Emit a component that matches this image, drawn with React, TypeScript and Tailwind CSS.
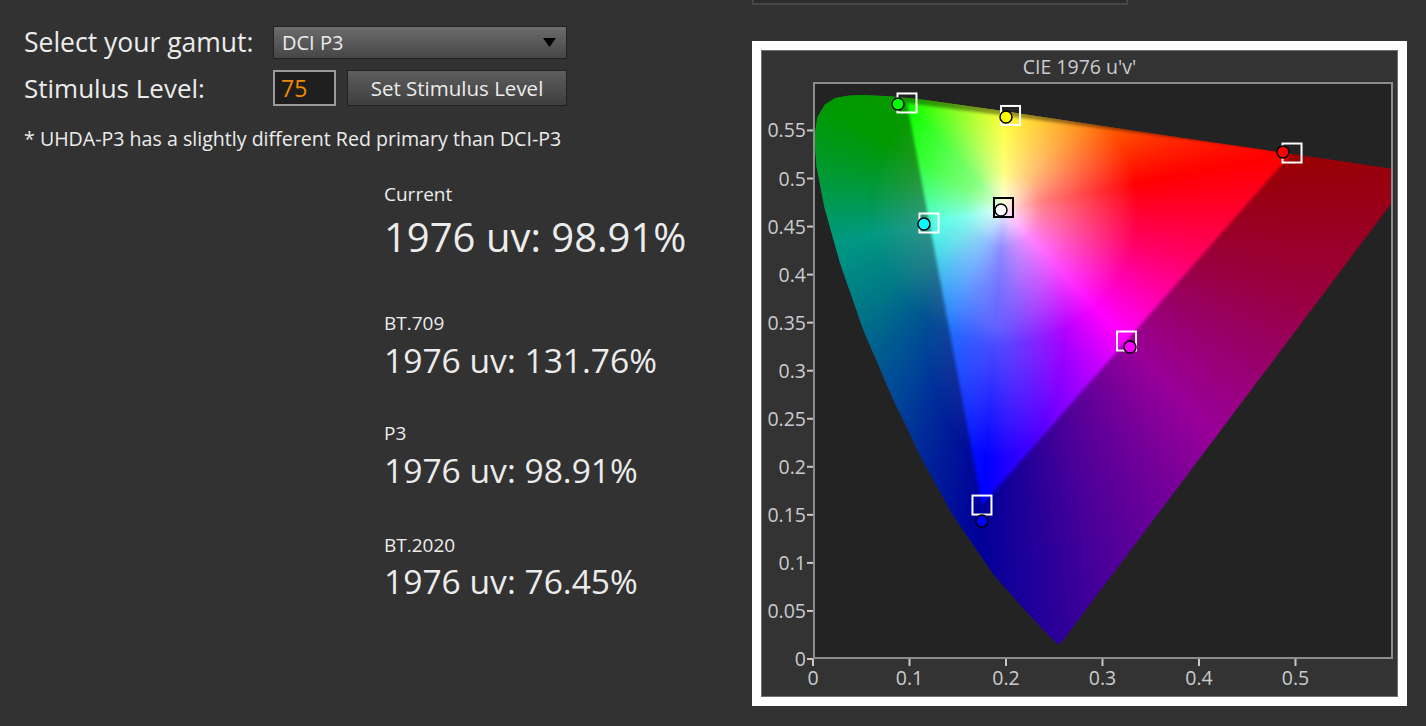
import React from "react";

// CIE 1976 u'v' spectral locus, 380nm -> 700nm
const LOCUS: [number, number][] = [
  [0.2568, 0.0166], [0.2557, 0.0159], [0.2545, 0.0159], [0.2522, 0.0169],
  [0.2461, 0.0226], [0.2347, 0.035], [0.2161, 0.0549], [0.1877, 0.0871],
  [0.1441, 0.151], [0.1147, 0.2044], [0.0828, 0.2708], [0.0521, 0.3427],
  [0.0282, 0.4117], [0.0119, 0.4698], [0.0035, 0.5131], [0.0014, 0.5432],
  [0.0046, 0.5638], [0.0123, 0.577], [0.0231, 0.5837], [0.036, 0.5861],
  [0.0501, 0.5868], [0.0792, 0.5856], [0.1127, 0.5821], [0.1531, 0.5766],
  [0.2026, 0.5694], [0.2623, 0.5604], [0.3315, 0.5501], [0.4035, 0.5393],
  [0.4692, 0.5296], [0.5203, 0.5219], [0.5565, 0.5165], [0.583, 0.5125],
  [0.6005, 0.5099], [0.6234, 0.5065],
];

const PLOT_W = 580;
const PLOT_H = 577;
const px = (u: number) => u * 965;
const py = (v: number) => PLOT_H - v * 961;

const TRIANGLE: [number, number][] = [
  [0.0974, 0.5786],
  [0.4964, 0.5265],
  [0.1751, 0.1602],
];

const WHITE: [number, number] = [0.1978, 0.4683];

const targets = [
  { u: 0.0974, v: 0.5786, dark: false },
  { u: 0.2047, v: 0.5656, dark: false },
  { u: 0.1974, v: 0.4698, dark: true },
  { u: 0.1202, v: 0.4537, dark: false },
  { u: 0.4964, v: 0.5265, dark: false },
  { u: 0.3249, v: 0.3309, dark: false },
  { u: 0.1751, v: 0.1602, dark: false },
];

const measured = [
  { u: 0.0881, v: 0.5775, c: "#00ff00" },
  { u: 0.2, v: 0.564, c: "#ffff00" },
  { u: 0.1948, v: 0.4672, c: "#ffffff" },
  { u: 0.115, v: 0.4527, c: "#00ffff" },
  { u: 0.487, v: 0.5276, c: "#ff0000" },
  { u: 0.3285, v: 0.3247, c: "#ff00ff" },
  { u: 0.1751, v: 0.1436, c: "#0000ff" },
];

const yTicks = ["0", "0.05", "0.1", "0.15", "0.2", "0.25", "0.3", "0.35", "0.4", "0.45", "0.5", "0.55"];
const xTicks = ["0", "0.1", "0.2", "0.3", "0.4", "0.5"];

const pts = (list: [number, number][]) =>
  list.map(([u, v]) => `${px(u).toFixed(1)},${py(v).toFixed(1)}`).join(" ");

const Chart = (): JSX.Element => {
  const wx = px(WHITE[0]);
  const wy = py(WHITE[1]);
  const clip = `polygon(${LOCUS.map(([u, v]) => `${px(u).toFixed(1)}px ${py(v).toFixed(1)}px`).join(", ")})`;
  const bg =
    `radial-gradient(circle at ${wx}px ${wy}px, rgba(255,255,255,0.95) 0px, rgba(255,255,255,0.5) 38px, rgba(255,255,255,0) 135px), ` +
    `radial-gradient(ellipse 70px 130px at ${wx - 8}px ${wy + 120}px, rgba(235,240,255,0.35) 0px, rgba(235,240,255,0) 100%), ` +
    `conic-gradient(from 0deg at ${wx}px ${wy}px, #ffff00 0deg, #ff8c00 40deg, #ff0000 79deg, #ff0066 105deg, #ff00ff 137deg, #7a00ff 165deg, #0000ff 184deg, #0070ff 208deg, #00c8e0 235deg, #00ffd8 259deg, #00ff50 282deg, #00ff00 300deg, #10ff00 317deg, #99ff00 340deg, #ffff00 360deg)`;
  const tri = TRIANGLE.map(([u, v]) => [px(u), py(v)]);
  const darkPath = `M-20 -20 H640 V640 H-20 Z M${tri[0][0]} ${tri[0][1]} L${tri[1][0]} ${tri[1][1]} L${tri[2][0]} ${tri[2][1]} Z`;

  return (
    <div className="relative w-[580px] h-[577px] ml-[51px]">
      <div className="absolute inset-0 overflow-hidden bg-[#232323]">
        <div className="absolute inset-0" style={{ clipPath: clip, background: bg }} />
        <svg className="absolute inset-0" width={PLOT_W} height={PLOT_H}>
          <defs>
            <clipPath id="locus">
              <polygon points={pts(LOCUS)} />
            </clipPath>
            <filter id="soft" x="-10%" y="-10%" width="120%" height="120%">
              <feGaussianBlur stdDeviation="1.6" />
            </filter>
          </defs>
          <g clipPath="url(#locus)">
            <path d={darkPath} fillRule="evenodd" fill="#000" opacity={0.4} filter="url(#soft)" />
          </g>
          {targets.map((t, i) => (
            <rect
              key={i}
              x={px(t.u) - 9.5}
              y={py(t.v) - 9.5}
              width={19}
              height={19}
              fill="none"
              stroke={t.dark ? "#000" : "#fff"}
              strokeWidth={2}
            />
          ))}
          {measured.map((m, i) => (
            <circle key={i} cx={px(m.u)} cy={py(m.v)} r={6} fill={m.c} stroke="#000" strokeWidth={1.5} />
          ))}
        </svg>
      </div>
      <div className="absolute inset-0 border-2 border-[#8c8c8c] pointer-events-none" />
      <svg className="absolute left-0 top-0 overflow-visible" width={PLOT_W} height={PLOT_H}>
        {yTicks.map((t, i) => {
          const y = py(i * 0.05);
          return (
            <g key={t}>
              <line x1={-6} x2={0} y1={y} y2={y} stroke="#c8c8c8" strokeWidth={2} />
              <text x={-7} y={y + 7} textAnchor="end" fontSize={19.5} fill="#c9ccd0" fontFamily="'Open Sans', sans-serif">
                {t}
              </text>
            </g>
          );
        })}
        {xTicks.map((t, i) => {
          const x = px(i * 0.1);
          return (
            <g key={t}>
              <line x1={x} x2={x} y1={PLOT_H} y2={PLOT_H + 7} stroke="#c8c8c8" strokeWidth={2} />
              <text x={x} y={PLOT_H + 26} textAnchor="middle" fontSize={19.5} fill="#c9ccd0" fontFamily="'Open Sans', sans-serif">
                {t}
              </text>
            </g>
          );
        })}
      </svg>
    </div>
  );
};

const App = (): JSX.Element => {
  return (
    <div className="w-[1426px] h-[726px] bg-[#323232] flex font-['Open_Sans',sans-serif] text-[#ececec] overflow-hidden">
      <div className="w-[752px] pl-6 pt-[26px]">
        <div className="flex items-center h-[33px]">
          <div className="w-[249px] text-[26.5px] leading-[33px] whitespace-nowrap">Select your gamut:</div>
          <div className="w-[294px] h-[33px] flex items-center justify-between pl-2 pr-[10px] border border-[#222] bg-gradient-to-b from-[#6c6c6c] to-[#464646]">
            <span className="text-[20px]">DCI P3</span>
            <svg width="13" height="9" viewBox="0 0 13 9">
              <path d="M0 0 H13 L6.5 9 Z" fill="#000" />
            </svg>
          </div>
        </div>
        <div className="flex items-center h-9 mt-[11px]">
          <div className="w-[249px] text-[26px] leading-9 whitespace-nowrap">Stimulus Level:</div>
          <div className="w-[63px] h-9 flex items-center pl-[6px] border-2 border-[#9a9a9a] bg-[#1e1e1e] text-[23px] text-[#f08a00]">
            75
          </div>
          <div className="w-[220px] h-9 ml-[11px] flex items-center justify-center border border-[#222] bg-gradient-to-b from-[#5e5e5e] to-[#3e3e3e] text-[20.5px] whitespace-nowrap">
            Set Stimulus Level
          </div>
        </div>
        <p className="mt-[21px] text-[19.6px] leading-6 whitespace-nowrap">* UHDA-P3 has a slightly different Red primary than DCI-P3</p>

        <div className="ml-[360px] flex flex-col whitespace-nowrap">
          <div className="mt-[31px] text-[19px] leading-6">Current</div>
          <div className="mt-[9px] text-[40px] leading-[44px]">1976 uv: 98.91%</div>
          <div className="mt-[52px] text-[19px] leading-6">BT.709</div>
          <div className="mt-[5px] text-[33.6px] leading-10">1976 uv: 131.76%</div>
          <div className="mt-[41px] text-[19px] leading-6">P3</div>
          <div className="mt-[5px] text-[33.6px] leading-10">1976 uv: 98.91%</div>
          <div className="mt-[43px] text-[19px] leading-6">BT.2020</div>
          <div className="mt-1 text-[33.6px] leading-10">1976 uv: 76.45%</div>
        </div>
      </div>

      <div className="w-[674px] flex flex-col">
        <div className="w-[376px] h-[5px] border-x-2 border-b-2 border-[#474747] bg-[#2c2c2c]" />
        <div className="mt-9 w-[655px] h-[665px] border-[9px] border-white">
          <div className="w-full h-full border border-[#6e6e6e] bg-[#333333] flex flex-col">
            <div className="h-[31px] flex items-center justify-center text-[19.5px] text-[#c9ccd0]">CIE 1976 u'v'</div>
            <Chart />
          </div>
        </div>
      </div>
    </div>
  );
};

export default App;
